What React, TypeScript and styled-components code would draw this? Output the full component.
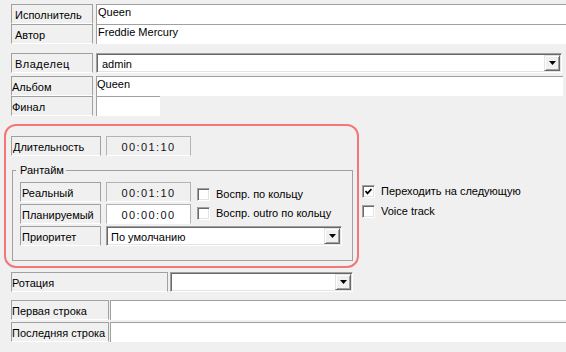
import React from "react";
import styled, { createGlobalStyle } from "styled-components";

const GlobalStyle = createGlobalStyle`
  html, body { margin: 0; padding: 0; background: #f0f0f0; }
  body {
    font-family: "Liberation Sans", Arial, sans-serif;
    font-size: 11px;
    color: #000;
    overflow: hidden;
  }
  * { box-sizing: border-box; }
`;

const Page = styled.div`
  width: 566px;
  height: 352px;
  padding-top: 4px;
  overflow: hidden;
  display: flex;
  flex-direction: column;
`;

const Row = styled.div<{ $mt?: number; $pl?: number; $gap?: number; $h?: number }>`
  display: flex;
  align-items: stretch;
  flex-shrink: 0;
  height: ${(p) => p.$h ?? 20}px;
  margin-top: ${(p) => p.$mt ?? 0}px;
  padding-left: ${(p) => p.$pl ?? 11}px;
  gap: ${(p) => p.$gap ?? 3}px;
`;

const Caption = styled.div<{ $w: number; $pad?: number; $ls?: number }>`
  width: ${(p) => p.$w}px;
  height: 20px;
  flex-shrink: 0;
  display: flex;
  align-items: center;
  padding-left: ${(p) => p.$pad ?? 0}px;
  padding-top: 1px;
  border: 1px solid #a0a0a0;
  border-bottom-color: #fff;
  letter-spacing: ${(p) => p.$ls ?? 0}px;
  white-space: nowrap;
  overflow: hidden;
`;

const Field = styled.div<{ $w?: number; $pad?: number; $mr?: number }>`
  ${(p) => (p.$w ? `width: ${p.$w}px; flex-shrink: 0;` : `flex: 1;`)}
  margin-right: ${(p) => p.$mr ?? 0}px;
  background: #fff;
  border-top: 1px solid #a0a0a0;
  border-left: 1px solid #a0a0a0;
  padding: 1px 0 0 ${(p) => p.$pad ?? 1}px;
  line-height: 13px;
  white-space: nowrap;
  overflow: hidden;
`;

const TimeBox = styled.div<{ $readOnly?: boolean }>`
  width: 85px;
  height: 20px;
  flex-shrink: 0;
  display: flex;
  align-items: center;
  justify-content: center;
  padding-top: 1px;
  background: ${(p) => (p.$readOnly ? "#f0f0f0" : "#fff")};
  border: 1px solid #b4b4b4;
  border-bottom-color: #fff;
  letter-spacing: 1.4px;
  color: #101020;
`;

const Combo = styled.div<{ $w?: number; $mr?: number; $pad?: number }>`
  ${(p) => (p.$w ? `width: ${p.$w}px; flex-shrink: 0;` : `flex: 1;`)}
  height: 20px;
  margin-right: ${(p) => p.$mr ?? 0}px;
  display: flex;
  align-items: center;
  background: #fff;
  border: 1px solid;
  border-color: #a0a0a0 #fff #fff #a0a0a0;
  box-shadow: inset 1px 1px 0 #696969, inset -1px -1px 0 #e3e3e3;
  padding: 0 1px 0 ${(p) => p.$pad ?? 5}px;
`;

const ComboText = styled.span`
  flex: 1;
  white-space: nowrap;
  overflow: hidden;
  padding-top: 1px;
`;

const DropButton = styled.div`
  width: 16px;
  height: 16px;
  flex-shrink: 0;
  background: #f0f0f0;
  border: 1px solid;
  border-color: #e3e3e3 #696969 #696969 #e3e3e3;
  box-shadow: inset 1px 1px 0 #fff, inset -1px -1px 0 #a0a0a0;
  display: flex;
  align-items: center;
  justify-content: center;
`;

const Arrow = () => (
  <svg width="7" height="4" viewBox="0 0 7 4">
    <polygon points="0,0 7,0 3.5,4" fill="#000" />
  </svg>
);

const Select = ({ text, w, mr, pad }: { text: string; w?: number; mr?: number; pad?: number }) => (
  <Combo $w={w} $mr={mr} $pad={pad}>
    <ComboText>{text}</ComboText>
    <DropButton>
      <Arrow />
    </DropButton>
  </Combo>
);

const MiddleRow = styled.div`
  display: flex;
  align-items: flex-start;
  flex-shrink: 0;
  margin-top: 8px;
  padding-left: 4px;
`;

const Highlight = styled.div`
  width: 355px;
  height: 144px;
  flex-shrink: 0;
  border: 2px solid #f47676;
  border-radius: 12px;
  padding: 10px 0 0 5px;
`;

const InnerRow = styled.div`
  display: flex;
  gap: 5px;
  height: 20px;
`;

const Group = styled.fieldset`
  margin: 8px 0 0 1px;
  width: 341px;
  padding: 5px 0 14px 7px;
  border: 1px solid #a0a0a0;
  min-inline-size: 0;
`;

const GroupTitle = styled.legend`
  padding: 0 2px 0 4px;
  margin-left: -4px;
  line-height: 13px;
`;

const GroupGrid = styled.div`
  display: grid;
  grid-template-columns: 81px 85px auto;
  grid-template-rows: 20px 20px 20px;
  column-gap: 5px;
  row-gap: 2px;
`;

const CheckColumn = styled.div<{ $pt: number; $gap: number }>`
  display: flex;
  flex-direction: column;
  padding-top: ${(p) => p.$pt}px;
  gap: ${(p) => p.$gap}px;
`;

const GroupChecks = styled(CheckColumn)`
  grid-column: 3;
  grid-row: 1 / 3;
  margin-left: 1px;
`;

const SideChecks = styled(CheckColumn)`
  margin-left: 3px;
`;

const PriorityCell = styled.div`
  grid-column: 2 / 4;
  width: 236px;
  display: flex;
`;

const CheckItem = styled.label`
  display: flex;
  align-items: center;
  gap: 6px;
  height: 13px;
  white-space: nowrap;
`;

const CheckText = styled.span`
  line-height: 13px;
  margin-top: -1px;
`;

const Box = styled.span`
  width: 13px;
  height: 13px;
  flex-shrink: 0;
  background: #fff;
  border: 1px solid;
  border-color: #a0a0a0 #fff #fff #a0a0a0;
  box-shadow: inset 1px 1px 0 #696969, inset -1px -1px 0 #e3e3e3;
  display: flex;
  align-items: center;
  justify-content: center;
`;

const Check = ({ checked, label }: { checked?: boolean; label: string }) => (
  <CheckItem>
    <Box>
      {checked && (
        <svg width="7" height="7" viewBox="0 0 7 7">
          <polyline points="0.5,3 2.5,5.3 6.5,1" fill="none" stroke="#000" strokeWidth="1.8" />
        </svg>
      )}
    </Box>
    <CheckText>{label}</CheckText>
  </CheckItem>
);

export default function App() {
  return (
    <>
      <GlobalStyle />
      <Page>
        <Row>
          <Caption $w={82} $pad={3}>Исполнитель</Caption>
          <Field>Queen</Field>
        </Row>
        <Row>
          <Caption $w={82} $pad={3}>Автор</Caption>
          <Field>Freddie Mercury</Field>
        </Row>
        <Row $mt={9}>
          <Caption $w={82} $pad={3} $ls={0.5}>Владелец</Caption>
          <Select text="admin" mr={4} />
        </Row>
        <Row $mt={3}>
          <Caption $w={82}>Альбом</Caption>
          <Field $mr={3} $pad={0}>Queen</Field>
        </Row>
        <Row>
          <Caption $w={82}>Финал</Caption>
          <Field $w={64} />
        </Row>

        <MiddleRow>
          <Highlight>
            <InnerRow>
              <Caption $w={90} $pad={1}>Длительность</Caption>
              <TimeBox $readOnly>00:01:10</TimeBox>
            </InnerRow>
            <Group>
              <GroupTitle>Рантайм</GroupTitle>
              <GroupGrid>
                <Caption $w={81} $pad={1}>Реальный</Caption>
                <TimeBox $readOnly>00:01:10</TimeBox>
                <GroupChecks $pt={6} $gap={6}>
                  <Check label="Воспр. по кольцу" />
                  <Check label="Воспр. outro по кольцу" />
                </GroupChecks>
                <Caption $w={81} $pad={1}>Планируемый</Caption>
                <TimeBox>00:00:00</TimeBox>
                <Caption $w={81} $pad={1}>Приоритет</Caption>
                <PriorityCell>
                  <Select text="По умолчанию" pad={4} />
                </PriorityCell>
              </GroupGrid>
            </Group>
          </Highlight>
          <SideChecks $pt={61} $gap={7}>
            <Check checked label="Переходить на следующую" />
            <Check label="Voice track" />
          </SideChecks>
        </MiddleRow>

        <Row $mt={4} $gap={2}>
          <Caption $w={157}>Ротация</Caption>
          <Select text="" w={183} />
        </Row>
        <Row $mt={8} $gap={1}>
          <Caption $w={98}>Первая строка</Caption>
          <Field />
        </Row>
        <Row $mt={2} $gap={1}>
          <Caption $w={98}>Последняя строка</Caption>
          <Field />
        </Row>
      </Page>
    </>
  );
}
